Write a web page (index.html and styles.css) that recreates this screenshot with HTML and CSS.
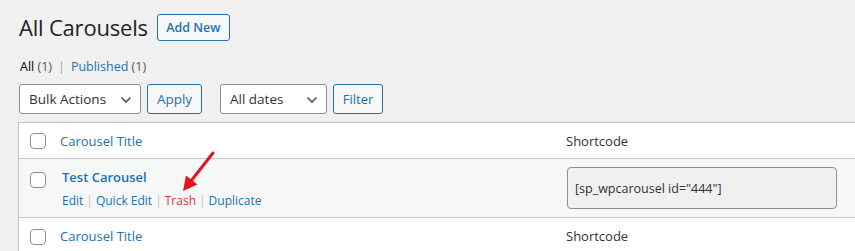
FILE: index.html
```html
<!DOCTYPE html>
<html>
<head>
<meta charset="utf-8">
<link rel="stylesheet" href="styles.css">
</head>
<body>
<div class="wrap">
  <div class="heading">
    <h1 class="title">All Carousels</h1>
    <a class="btn add-new">Add New</a>
  </div>
  <ul class="subsubsub">
    <li class="current">All <span class="count">(1)</span></li>
    <li class="sep">|</li>
    <li><a>Published <span class="count">(1)</span></a></li>
  </ul>
  <div class="tablenav">
    <div class="select bulk">Bulk Actions<span class="chev"><svg width="12" height="8" viewBox="0 0 12 8"><path d="M1.5 1.5 6 6l4.5-4.5" fill="none" stroke="#50575e" stroke-width="1.6"/></svg></span></div>
    <a class="btn apply">Apply</a>
    <div class="select dates">All dates<span class="chev"><svg width="12" height="8" viewBox="0 0 12 8"><path d="M1.5 1.5 6 6l4.5-4.5" fill="none" stroke="#50575e" stroke-width="1.6"/></svg></span></div>
    <a class="btn filter">Filter</a>
  </div>
  <div class="list">
    <div class="row head">
      <div class="cb"><span class="checkbox"></span></div>
      <div class="col-title"><a>Carousel Title</a></div>
      <div class="col-sc">Shortcode</div>
    </div>
    <div class="row item">
      <div class="cb"><span class="checkbox"></span></div>
      <div class="col-title">
        <a class="row-title">Test Carousel</a>
        <div class="row-actions"><a>Edit</a><span class="bar">|</span><a>Quick Edit</a><span class="bar">|</span><a class="trash">Trash</a><span class="bar">|</span><a>Duplicate</a></div>
      </div>
      <div class="col-sc"><div class="sc-input">[sp_wpcarousel id="444"]</div></div>
    </div>
    <div class="row head foot">
      <div class="cb"><span class="checkbox"></span></div>
      <div class="col-title"><a>Carousel Title</a></div>
      <div class="col-sc">Shortcode</div>
    </div>
  </div>
  <svg class="arrow" width="40" height="46" viewBox="0 0 40 46">
    <line x1="35" y1="3" x2="13" y2="31" stroke="#e8141c" stroke-width="3" stroke-linecap="round"/>
    <path d="M5 41 L8 25.5 L19.5 34.5 Z" fill="#e8141c"/>
  </svg>
</div>
</body>
</html>
```
FILE: styles.css
```css
* { box-sizing: border-box; }
html, body { margin: 0; padding: 0; }
body {
  background: #f0f0f1;
  font-family: "Segoe UI", "Open Sans", "Noto Sans", sans-serif;
  font-size: 13px;
  color: #3c434a;
  overflow: hidden;
  width: 855px;
  height: 251px;
}
a { color: #2271b1; text-decoration: none; }
.wrap { position: relative; padding-left: 18px; }
.heading { display: flex; align-items: center; padding-top: 13px; height: 41px; }
.title {
  margin: 0 9px 0 1px;
  font-size: 22px;
  font-weight: 400;
  color: #1d2327;
  line-height: 28px;
  letter-spacing: -0.2px;
}
.btn {
  display: inline-flex;
  align-items: center;
  justify-content: center;
  border: 1px solid #2271b1;
  border-radius: 3px;
  background: #f6f7f7;
  color: #2271b1;
  font-size: 13px;
}
.add-new { width: 73px; height: 27px; font-weight: 600; font-size: 12.5px; }
.subsubsub {
  list-style: none;
  margin: 0;
  padding: 0 0 0 2px;
  display: flex;
  gap: 6px;
  height: 30px;
  align-items: center;
  margin-top: 10px;
  font-size: 12.5px;
}
.subsubsub .current { color: #000; font-weight: 400; }
.subsubsub .count { color: #50575e; }
.subsubsub .sep { color: #a7aaad; }
.tablenav { display: flex; align-items: center; gap: 6px; margin-top: 3px; height: 30px; }
.select {
  height: 30px;
  border: 1px solid #8c8f94;
  border-radius: 3px;
  background: #fff;
  color: #2c3338;
  font-size: 13.5px;
  display: flex;
  align-items: center;
  padding-left: 9px;
  position: relative;
}
.select .chev { position: absolute; right: 8px; top: 11px; display: flex; }
.bulk { width: 122px; margin-left: 1px; }
.apply { width: 55px; height: 30px; font-size: 13.5px; }
.dates { width: 107px; margin-left: 12px; }
.filter { width: 50px; height: 30px; font-size: 13px; }
.list {
  margin-top: 8px;
  border: 1px solid #c3c4c7;
  border-right: none;
  background: #fff;
  width: 900px;
}
.row { display: flex; align-items: flex-start; }
.cb { width: 41px; padding-left: 11px; flex: none; }
.checkbox {
  display: block;
  width: 16px;
  height: 16px;
  border: 1px solid #8c8f94;
  border-radius: 4px;
  background: #fff;
}
.col-title { width: 506px; flex: none; }
.col-sc { flex: 1; color: #2c3338; }
.head { height: 35px; align-items: center; }
.head .checkbox { margin-top: 1px; }
.head .col-title a { font-size: 13px; }
.head .col-sc { font-size: 13px; }
.item {
  background: #f6f7f7;
  border-top: 1px solid #c3c4c7;
  border-bottom: 1px solid #c3c4c7;
  height: 60px;
}
.item .cb { padding-top: 13px; }
.item .col-title { padding-left: 2px; padding-top: 8px; }
.row-title { font-weight: 600; font-size: 13px; display: block; line-height: 20px; }
.row-actions { margin-top: 6px; line-height: 16px; font-size: 12px; }
.row-actions .bar { color: #c3c4c7; margin: 0 3px; }
.row-actions .trash { color: #d63638; }
.item .col-sc { padding-top: 8px; padding-left: 1px; }
.sc-input {
  width: 270px;
  height: 42px;
  border: 1px solid #8c8f94;
  border-radius: 4px;
  background: #f0f0f1;
  color: #2c3338;
  display: flex;
  align-items: center;
  padding-left: 7px;
  font-size: 12.5px;
}
.foot { height: 36px; }
.foot .checkbox { margin-top: 2px; }
.arrow { position: absolute; left: 178px; top: 150px; }
```
